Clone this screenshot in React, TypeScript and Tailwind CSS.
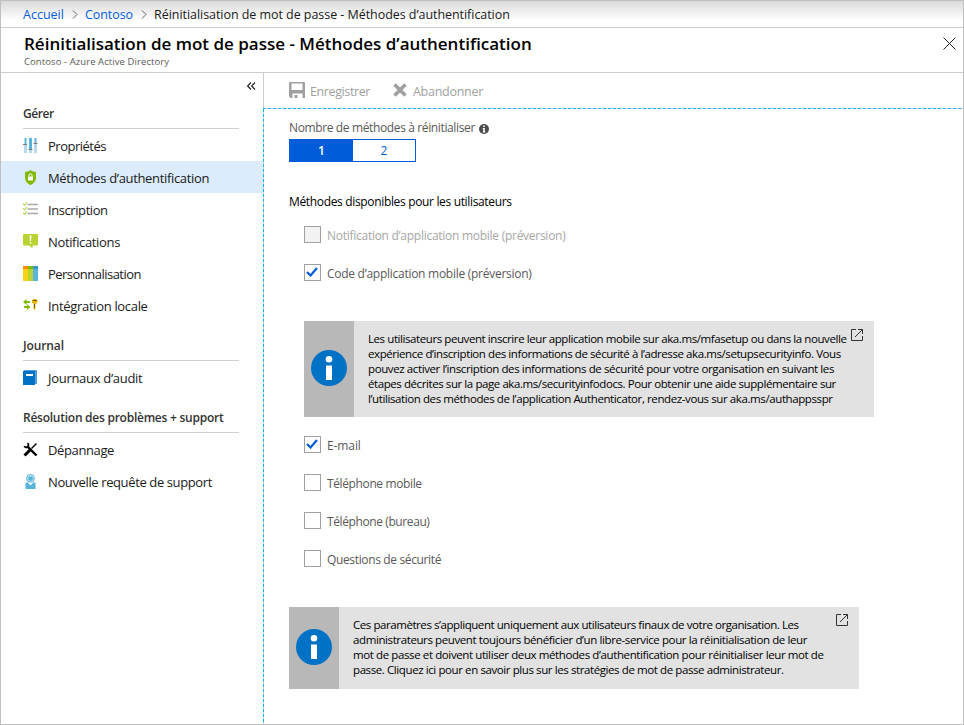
import type { ReactNode } from "react";

const SlidersIcon = () => (
  <svg width="16" height="16" viewBox="0 0 16 16">
    <rect x="1" y="0" width="3" height="15" fill="#b5daea" />
    <rect x="6" y="0" width="3" height="15" fill="#b5daea" />
    <rect x="11" y="0" width="3" height="15" fill="#b5daea" />
    <rect x="2" y="0" width="1" height="6" fill="#59b4d9" />
    <rect x="6" y="0" width="3" height="11" fill="#59b4d9" />
    <rect x="12" y="0" width="1" height="5" fill="#59b4d9" />
    <rect x="0" y="6" width="4" height="1" fill="#7a7a7a" />
    <rect x="5.5" y="11" width="4" height="1" fill="#7a7a7a" />
    <rect x="10.5" y="5" width="4" height="1" fill="#7a7a7a" />
  </svg>
);

const ShieldIcon = () => (
  <svg width="16" height="16" viewBox="0 0 16 16">
    <path d="M7.5 0C9 1.3 11 2 13 2v5.5c0 3.7-2.5 6-5.5 7.5C4.5 13.5 2 11.2 2 7.5V2c2 0 4-.7 5.5-2z" fill="#7fba00" />
    <path d="M5 6.500h5v4H5z" fill="#fff" />
    <path d="M6 6.500V5.300a1.500 1.500 0 0 1 3 0v1.200" fill="none" stroke="#fff" />
  </svg>
);

const ChecklistIcon = () => (
  <svg width="16" height="16" viewBox="0 0 16 16" fill="none">
    <path d="M4.500 2.500H15M4.500 7H15M4.500 11.500H15" stroke="#a9a9a9" strokeWidth="1.3" />
    <path d="M0 1.800l1.500 1.500L4 .5M0 6.300l1.500 1.500L4 5M0 10.800l1.500 1.500L4 9.500" stroke="#a5ce3a" strokeWidth="1.1" />
  </svg>
);

const NoticeIcon = () => (
  <svg width="16" height="16" viewBox="0 0 16 16">
    <path d="M1 0h13a1 1 0 0 1 1 1v9.500a1 1 0 0 1-1 1H9.500V14.500L6 11.500H1a1 1 0 0 1-1-1V1a1 1 0 0 1 1-1z" fill="#b8d432" />
    <path d="M6.500 1.500h2l-.4 5.500H6.900zM6.700 8h1.600v1.500H6.700z" fill="#fff" />
  </svg>
);

const PaletteIcon = () => (
  <svg width="16" height="16" viewBox="0 0 16 16">
    <rect width="5" height="15" fill="#fcd116" />
    <rect x="5" width="5" height="15" fill="#b8d432" />
    <rect x="10" width="5" height="15" fill="#59b4d9" />
    <rect width="5" height="3" fill="#ff8c00" />
    <rect x="5" width="5" height="3" fill="#7fba00" />
    <rect x="10" width="5" height="3" fill="#3999c6" />
  </svg>
);

const IntegrationIcon = () => (
  <svg width="16" height="16" viewBox="0 0 16 16">
    <path d="M0 4l3.500-3v2H7v2H3.500v2zM7.500 9L4 6.200V8H1v2h3v2z" fill="#7fba00" />
    <path d="M9 2.500L10.500 1h2.500l1.500 1.500v2L13 6h-.5v5l-1 1-1-1V6L9 4.500z" fill="#e8b800" />
    <path d="M9.500 2.500h4.500M11.500 6v4" stroke="#7a5c00" />
  </svg>
);

const BookIcon = () => (
  <svg width="16" height="16" viewBox="0 0 16 16">
    <path d="M1 0h13v14H2z" fill="#4f9fdc" />
    <path d="M0 1h12v14H0z" fill="#0072c6" />
    <rect x="3" y="4" width="7" height="2" fill="#fff" />
  </svg>
);

const ToolsIcon = () => (
  <svg width="16" height="16" viewBox="0 0 16 16" fill="none" stroke="#000">
    <path d="M4 4l9.500 9.500" strokeWidth="2.4" />
    <path d="M4.500 1.200a2.300 2.300 0 1 1-3.300 3" strokeWidth="1.8" />
    <path d="M13.500 1.500L8.500 6.500" strokeWidth="1.5" />
    <path d="M7 8L1.500 13.500" strokeWidth="3" />
  </svg>
);

const SupportIcon = () => (
  <svg width="16" height="16" viewBox="0 0 16 16">
    <circle cx="7.500" cy="4.300" r="3.900" fill="#c4e4f2" stroke="#59b4d9" strokeWidth="1" />
    <circle cx="7.500" cy="4.600" r="2.400" fill="#59b4d9" />
    <path d="M2.500 8.500h2.500l2.500 3 2.500-3h2.500V15h-10z" fill="#59b4d9" />
  </svg>
);

const InfoDisc = () => (
  <svg width="36" height="36" viewBox="0 0 36 36">
    <circle cx="18" cy="18" r="18" fill="#0072c6" />
    <circle cx="18" cy="9.300" r="3.300" fill="#fff" />
    <rect x="15" y="15.500" width="6" height="14.500" fill="#fff" />
  </svg>
);

const ExternalIcon = () => (
  <svg width="12" height="12" viewBox="0 0 12 12" fill="none" stroke="#333">
    <path d="M5 .5H.5v11h11V7M7 .5h4.500V5M11.500 .5L4 8" />
  </svg>
);

const SaveIcon = () => (
  <svg width="16" height="16" viewBox="0 0 16 16" className="mb-px">
    <path
      fillRule="evenodd"
      d="M1 0h14a1 1 0 0 1 1 1v15h-2.500v-4.500H3.500V16H1.500L0 14.500V1a1 1 0 0 1 1-1zM2.500 1.500V8h11V1.500z"
      fill="#a0a0a0"
    />
    <path d="M5.500 13h3v3h-3z" fill="#a0a0a0" />
  </svg>
);

const DiscardIcon = () => (
  <svg width="14" height="14" viewBox="0 0 14 14" stroke="#a0a0a0" strokeWidth="3.6" className="mb-px">
    <path d="M1.500 1.500l11 11M12.500 1.500l-11 11" />
  </svg>
);

const Chevron = () => (
  <svg width="6" height="9" viewBox="0 0 6 9" fill="none" stroke="#666" className="mr-[7px] ml-2">
    <path d="M1 .5l4 4-4 4" />
  </svg>
);

interface LabelProps {
  label: string;
  tracking: string;
}

function NavItem({ icon, label, tracking, active }: LabelProps & { icon: ReactNode; active?: boolean }) {
  return (
    <div className={`flex h-8 items-center pl-[22px] ${active ? "bg-[#dcecfd]" : ""}`}>
      <span className="w-[25px] pt-[2px]">{icon}</span>
      <span className={`pt-[3px] text-[13px] whitespace-nowrap ${tracking}`}>{label}</span>
    </div>
  );
}

function NavHeading({ label, tracking, height }: LabelProps & { height: string }) {
  return (
    <div className={`mr-6 ml-[22px] flex items-end border-b border-[#cfcfcf] pb-1 ${height}`}>
      <span className={`text-[12px] leading-5 font-semibold whitespace-nowrap text-[#333] ${tracking}`}>{label}</span>
    </div>
  );
}

function Check({ label, tracking, checked, disabled }: LabelProps & { checked?: boolean; disabled?: boolean }) {
  return (
    <div className="flex h-[17px] items-center">
      <span
        className={`flex h-[17px] w-[17px] items-center justify-center border border-[#a0a0a0] ${disabled ? "bg-[#f2f2f2]" : "bg-white"}`}
      >
        {checked && (
          <svg width="12" height="10" viewBox="0 0 12 10" fill="none" stroke="#015cda" strokeWidth="2.2" className="mr-px mb-px">
            <path d="M1 5l3.500 3.500L11 1" />
          </svg>
        )}
      </span>
      <span
        className={`ml-[6px] pt-[3px] text-[12px] whitespace-nowrap ${tracking} ${disabled ? "text-[#a6a6a6]" : "text-[#595959]"}`}
      >
        {label}
      </span>
    </div>
  );
}

function Banner({ lines, className, iconTop }: { lines: [string, string][]; className: string; iconTop: string }) {
  return (
    <div className={`flex w-[570px] bg-[#e2e2e2] ${className}`}>
      <div className="flex w-[50px] shrink-0 items-center justify-center bg-[#b8b8b8] pb-[2px]">
        <InfoDisc />
      </div>
      <div className="min-w-0 flex-1 pt-[10px] pl-[14px] text-[11.5px] leading-[15px] text-black">
        {lines.map(([text, tracking]) => (
          <p key={text} className={`whitespace-nowrap ${tracking}`}>
            {text}
          </p>
        ))}
      </div>
      <div className={`pr-[11px] ${iconTop}`}>
        <ExternalIcon />
      </div>
    </div>
  );
}

const appLines: [string, string][] = [
  ["Les utilisateurs peuvent inscrire leur application mobile sur aka.ms/mfasetup ou dans la nouvelle", "tracking-[-0.42px]"],
  ["expérience d’inscription des informations de sécurité à l’adresse aka.ms/setupsecurityinfo. Vous", "tracking-[-0.42px]"],
  ["pouvez activer l’inscription des informations de sécurité pour votre organisation en suivant les", "tracking-[-0.39px]"],
  ["étapes décrites sur la page aka.ms/securityinfodocs. Pour obtenir une aide supplémentaire sur", "tracking-[-0.42px]"],
  ["l’utilisation des méthodes de l’application Authenticator, rendez-vous sur aka.ms/authappsspr", "tracking-[-0.4px]"],
];

const adminLines: [string, string][] = [
  ["Ces paramètres s’appliquent uniquement aux utilisateurs finaux de votre organisation. Les", "tracking-[-0.435px]"],
  ["administrateurs peuvent toujours bénéficier d’un libre-service pour la réinitialisation de leur", "tracking-[-0.393px]"],
  ["mot de passe et doivent utiliser deux méthodes d’authentification pour réinitialiser leur mot de", "tracking-[-0.394px]"],
  ["passe. Cliquez ici pour en savoir plus sur les stratégies de mot de passe administrateur.", "tracking-[-0.405px]"],
];

export default function App() {
  return (
    <div className="flex h-[725px] w-[964px] flex-col border border-[#c0c0c0] bg-white font-['Open_Sans',sans-serif] text-[#1a1a1a]">
      <div className="flex h-[27px] shrink-0 items-center border-b border-[#cccccc] bg-linear-to-b from-[#dadada] to-white to-75% pl-[22px] text-[12.5px] whitespace-nowrap">
        <span className="pt-[2px] text-[#015cda]">Accueil</span>
        <Chevron />
        <span className="pt-[2px] tracking-[-0.05px] text-[#015cda]">Contoso</span>
        <Chevron />
        <span className="pt-[2px] tracking-[-0.05px]">Réinitialisation de mot de passe - Méthodes d’authentification</span>
      </div>

      <div className="flex h-[45px] shrink-0 justify-between border-b border-[#cccccc] pr-[7px] pl-[23px]">
        <div className="flex flex-col whitespace-nowrap">
          <h1 className="text-[17px] leading-8 font-semibold text-black">
            Réinitialisation de mot de passe - Méthodes d’authentification
          </h1>
          <p className="text-[9.5px] leading-[4px] tracking-[0.08px] text-[#595959]">Contoso - Azure Active Directory</p>
        </div>
        <svg width="13" height="13" viewBox="0 0 13 13" className="mt-[9px]" stroke="#222">
          <path d="M.5.5l12 12M12.5.5l-12 12" />
        </svg>
      </div>

      <div className="flex flex-1">
        <nav className="w-[262px] shrink-0">
          <div className="flex h-[26px] items-center justify-end pr-[7px]">
            <svg width="9" height="8" viewBox="0 0 9 8" fill="none" stroke="#222" strokeWidth="1.2">
              <path d="M4 .5L.7 4 4 7.500M8 .5L4.700 4 8 7.500" />
            </svg>
          </div>
          <NavHeading label="Gérer" tracking="tracking-[-0.45px]" height="h-[30px]" />
          <NavItem icon={<SlidersIcon />} label="Propriétés" tracking="tracking-[-0.49px]" />
          <NavItem icon={<ShieldIcon />} label="Méthodes d’authentification" tracking="tracking-[-0.34px]" active />
          <NavItem icon={<ChecklistIcon />} label="Inscription" tracking="tracking-[-0.42px]" />
          <NavItem icon={<NoticeIcon />} label="Notifications" tracking="tracking-[-0.35px]" />
          <NavItem icon={<PaletteIcon />} label="Personnalisation" tracking="tracking-[-0.52px]" />
          <NavItem icon={<IntegrationIcon />} label="Intégration locale" tracking="tracking-[-0.32px]" />
          <NavHeading label="Journal" tracking="tracking-[-0.1px]" height="h-10" />
          <NavItem icon={<BookIcon />} label="Journaux d’audit" tracking="tracking-[-0.3px]" />
          <NavHeading label="Résolution des problèmes + support" tracking="tracking-[-0.25px]" height="h-10" />
          <NavItem icon={<ToolsIcon />} label="Dépannage" tracking="tracking-[-0.38px]" />
          <NavItem icon={<SupportIcon />} label="Nouvelle requête de support" tracking="tracking-[-0.38px]" />
        </nav>

        <main className="flex flex-1 flex-col">
          <div className="flex h-[35px] items-center border-l border-[#cccccc] pl-[25px] text-[12.5px] text-[#a0a0a0]">
            <SaveIcon />
            <span className="ml-[5px] w-[60px] pt-[3px] tracking-[-0.39px] whitespace-nowrap">Enregistrer</span>
            <span className="mr-[6px] ml-[23px]">
              <DiscardIcon />
            </span>
            <span className="pt-[3px] tracking-[-0.28px] whitespace-nowrap">Abandonner</span>
          </div>
          <div className="h-px bg-[repeating-linear-gradient(90deg,#00b7f0_0_3px,#d5d5d5_3px_5px)]" />
          <div className="flex flex-1">
            <div className="w-px bg-[repeating-linear-gradient(180deg,#00b7f0_0_3px,#d5d5d5_3px_5px)]" />
            <div className="pl-[25px]">
              <div className="mt-[9px] flex h-5 items-center gap-1 text-[12px] text-[#595959]">
                <span className="tracking-[-0.37px] whitespace-nowrap">Nombre de méthodes à réinitialiser</span>
                <svg width="10" height="10" viewBox="0 0 10 10" className="mt-[2px]">
                  <circle cx="5" cy="5" r="5" fill="#4d4d4d" />
                  <path d="M4.200 1.500h1.600v1.400H4.200zM3.800 4h2v3.500h.5v.9H3.700v-.9h.5V4.900h-.4z" fill="#fff" />
                </svg>
              </div>
              <div className="mt-px flex h-[23px] w-[127px] border border-[#015cda] text-[12px]">
                <div className="flex w-[63px] items-center justify-center bg-[#015cda] font-semibold text-white">1</div>
                <div className="flex flex-1 items-center justify-center text-[#015cda]">2</div>
              </div>
              <div className="mt-[30px] flex h-5 items-center text-[12px] tracking-[-0.34px] whitespace-nowrap text-black">
                Méthodes disponibles pour les utilisateurs
              </div>
              <div className="mt-[14px] flex flex-col gap-[21px] pl-[15px]">
                <Check disabled label="Notification d’application mobile (préversion)" tracking="tracking-[-0.27px]" />
                <Check checked label="Code d’application mobile (préversion)" tracking="tracking-[-0.27px]" />
              </div>
              <Banner lines={appLines} className="mt-10 ml-[15px] h-[96px]" iconTop="pt-2" />
              <div className="mt-[19px] flex flex-col gap-[21px] pl-[15px]">
                <Check checked label="E-mail" tracking="tracking-[-0.1px]" />
                <Check label="Téléphone mobile" tracking="tracking-[-0.38px]" />
                <Check label="Téléphone (bureau)" tracking="tracking-[-0.4px]" />
                <Check label="Questions de sécurité" tracking="tracking-[-0.36px]" />
              </div>
              <Banner lines={adminLines} className="mt-10 h-[82px]" iconTop="pt-[7px]" />
            </div>
          </div>
        </main>
      </div>
    </div>
  );
}
